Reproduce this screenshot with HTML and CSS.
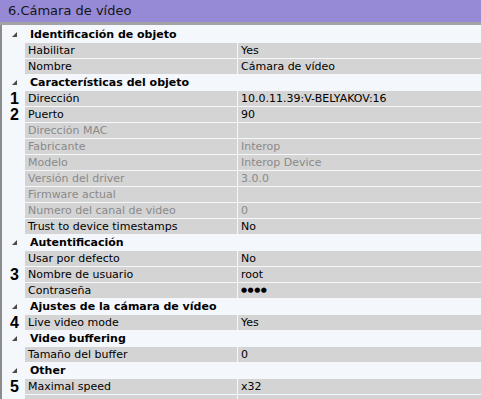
FILE: index.html
```html
<!DOCTYPE html>
<html>
<head>
<meta charset="utf-8">
<title>Cámara de vídeo</title>
<link rel="stylesheet" href="styles.css">
</head>
<body>
<div class="panel">
  <div class="panel-title">6.Cámara de vídeo</div>
  <div class="grid">
    <div class="group"><span class="gutter"><span class="arrow"></span></span><span class="group-name">Identificación de objeto</span></div>
    <div class="row"><span class="gutter"></span><span class="name">Habilitar</span><span class="value">Yes</span></div>
    <div class="row"><span class="gutter"></span><span class="name">Nombre</span><span class="value">Cámara de vídeo</span></div>

    <div class="group"><span class="gutter"><span class="arrow"></span></span><span class="group-name">Características del objeto</span></div>
    <div class="row"><span class="gutter">1</span><span class="name">Dirección</span><span class="value">10.0.11.39:V-BELYAKOV:16</span></div>
    <div class="row"><span class="gutter">2</span><span class="name">Puerto</span><span class="value">90</span></div>
    <div class="row off"><span class="gutter"></span><span class="name">Dirección MAC</span><span class="value"></span></div>
    <div class="row off"><span class="gutter"></span><span class="name">Fabricante</span><span class="value">Interop</span></div>
    <div class="row off"><span class="gutter"></span><span class="name">Modelo</span><span class="value">Interop Device</span></div>
    <div class="row off"><span class="gutter"></span><span class="name">Versión del driver</span><span class="value">3.0.0</span></div>
    <div class="row off"><span class="gutter"></span><span class="name">Firmware actual</span><span class="value"></span></div>
    <div class="row off"><span class="gutter"></span><span class="name">Numero del canal de video</span><span class="value">0</span></div>
    <div class="row"><span class="gutter"></span><span class="name">Trust to device timestamps</span><span class="value">No</span></div>

    <div class="group"><span class="gutter"><span class="arrow"></span></span><span class="group-name">Autentificación</span></div>
    <div class="row"><span class="gutter"></span><span class="name">Usar por defecto</span><span class="value">No</span></div>
    <div class="row"><span class="gutter">3</span><span class="name">Nombre de usuario</span><span class="value">root</span></div>
    <div class="row"><span class="gutter"></span><span class="name">Contraseña</span><span class="value dots">●●●●</span></div>

    <div class="group"><span class="gutter"><span class="arrow"></span></span><span class="group-name">Ajustes de la cámara de vídeo</span></div>
    <div class="row"><span class="gutter">4</span><span class="name">Live video mode</span><span class="value">Yes</span></div>

    <div class="group"><span class="gutter"><span class="arrow"></span></span><span class="group-name">Video buffering</span></div>
    <div class="row"><span class="gutter"></span><span class="name">Tamaño del buffer</span><span class="value">0</span></div>

    <div class="group"><span class="gutter"><span class="arrow"></span></span><span class="group-name">Other</span></div>
    <div class="row"><span class="gutter">5</span><span class="name">Maximal speed</span><span class="value">x32</span></div>
    <div class="row"><span class="gutter"></span><span class="name"></span><span class="value"></span></div>
  </div>
</div>
</body>
</html>
```
FILE: styles.css
```css
body {
  margin: 0;
  width: 481px;
  height: 399px;
  overflow: hidden;
  background: #f4f7fc;
  font-family: 'DejaVu Sans', Verdana, sans-serif;
  font-size: 11px;
  color: #000;
}

.panel-title {
  height: 22px;
  line-height: 22px;
  padding-left: 8px;
  background: #9689d6;
  border-bottom: 3px solid #a3a3a3;
  font-size: 13px;
  color: #151515;
}

.grid {
  border-left: 2px solid #8c8c8c;
  padding-top: 2px;
  height: 372px;
}

.row, .group {
  display: grid;
  grid-template-columns: 22px 212px 1fr;
  column-gap: 1px;
  height: 15px;
  line-height: 15px;
  margin-bottom: 1px;
}

.name, .value {
  background: #d4d4d4;
  padding-left: 3px;
  white-space: nowrap;
  overflow: hidden;
}

.off .name, .off .value {
  color: #8a8a8a;
}

.gutter {
  font-family: 'Liberation Sans', Arial, sans-serif;
  font-weight: bold;
  font-size: 16px;
  line-height: 15px;
  padding-left: 8px;
  color: #000;
  display: flex;
  align-items: center;
}

.arrow {
  width: 0;
  height: 0;
  margin-left: 2px;
  border-left: 5px solid transparent;
  border-bottom: 5px solid #4a4a4a;
}

.group-name {
  grid-column: 2 / 4;
  padding-left: 5px;
  font-weight: bold;
}

.dots {
  font-size: 7px;
  letter-spacing: 0.5px;
}
```
